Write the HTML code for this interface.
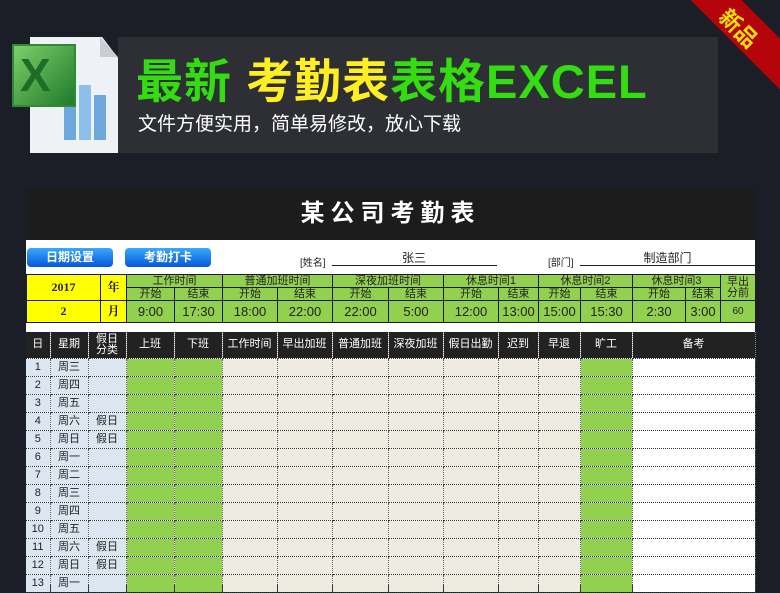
<!DOCTYPE html>
<html><head><meta charset="utf-8"><style>
*{margin:0;padding:0;box-sizing:border-box}
body{width:780px;height:585px;overflow:hidden;background:#1b1e26;position:relative;font-family:"Liberation Sans","Noto Sans CJK SC",sans-serif}
.a{position:absolute}
table{border-collapse:collapse;table-layout:fixed;position:absolute}
td{text-align:center;overflow:hidden;white-space:nowrap;padding:0}
.info td{border:1px solid #1a1a1a;background:#92d050;color:#222;font-size:11px;line-height:11px}
.info td.y{background:#ffff00;font-weight:bold;font-family:"Liberation Serif","Noto Serif CJK SC",serif;font-size:12px}
.info .v{font-size:13px}
.grid td{border-bottom:1px dotted #333;border-right:1px dotted #555;font-size:11px;height:18px;line-height:17px;color:#222}
.grid tr.h td{background:#222;color:#fff;height:26px;border-right:1px dotted #888;font-size:11px;line-height:11px}
.c1{background:#dce6f1}.g{background:#92d050}.b{background:#eeece1}.w{background:#fff}
</style></head><body>
<div class="a" style="left:118px;top:37px;width:600px;height:116px;background:#2d2f35"></div>
<div class="a" style="left:30px;top:37px;width:88px;height:116px;background:#eef1f6;clip-path:polygon(0 0,82% 0,100% 18%,100% 100%,0 100%)"></div>
<div class="a" style="left:100px;top:37px;width:18px;height:20px;background:#c9ced6;clip-path:polygon(0 0,100% 100%,0 100%)"></div>
<div class="a" style="left:64px;top:100px;width:12px;height:40px;background:#6fa8dc"></div>
<div class="a" style="left:79px;top:85px;width:12px;height:55px;background:#8cc0ea"></div>
<div class="a" style="left:94px;top:95px;width:12px;height:45px;background:#6fa8dc"></div>
<div class="a" style="left:12px;top:44px;width:64px;height:63px;background:linear-gradient(135deg,#7ccf6a,#1f7a2a);border:2px solid #2c8b34"></div>
<div class="a" style="left:20px;top:47px;font-size:46px;font-weight:bold;color:#1f6d25;line-height:56px">X</div>
<div class="a" style="left:136px;top:54px;font-size:47px;font-weight:bold;line-height:56px;color:#33dd11;letter-spacing:1px;white-space:nowrap">最新 <span style="color:#ffee22">考勤表</span>表格EXCEL</div>
<div class="a" style="left:138px;top:113px;font-size:19px;color:#fff;line-height:24px;white-space:nowrap">文件方便实用，简单易修改，放心下载</div>
<div class="a" style="left:642px;top:8px;width:200px;height:36px;background:#b5050a;transform:rotate(45deg)"></div>
<div class="a" style="left:716px;top:16px;color:#ffe000;font-size:22px;font-weight:bold;transform:rotate(45deg);white-space:nowrap;line-height:26px">新品</div>
<div class="a" style="left:26px;top:188px;width:729px;height:397px;background:#fff"></div>
<div class="a" style="left:26px;top:188px;width:729px;height:52px;background:#1c1c1c;color:#fff;font-size:24px;font-weight:bold;text-align:center;line-height:52px;letter-spacing:6px">某公司考勤表</div>
<div class="a" style="left:27px;top:248px;width:86px;height:19px;border-radius:4px;background:linear-gradient(#38a8ff,#0758d8);color:#fff;font-size:12px;text-align:center;line-height:19px;font-weight:bold">日期设置</div>
<div class="a" style="left:125px;top:248px;width:86px;height:19px;border-radius:4px;background:linear-gradient(#38a8ff,#0758d8);color:#fff;font-size:12px;text-align:center;line-height:19px;font-weight:bold">考勤打卡</div>
<div class="a" style="left:300px;top:254px;font-size:10px;color:#222">[姓名]</div>
<div class="a" style="left:332px;top:249px;width:165px;height:17px;border-bottom:1px solid #222;font-size:12px;padding-left:70px;color:#222">张三</div>
<div class="a" style="left:548px;top:254px;font-size:10px;color:#222">[部门]</div>
<div class="a" style="left:580px;top:249px;width:175px;height:17px;border-bottom:1px solid #222;font-size:12px;text-align:center;color:#222">制造部门</div>
<table class="info" style="left:26px;top:274px;width:729px">
<colgroup><col style="width:74px"><col style="width:26px"><col style="width:48px"><col style="width:48px"><col style="width:55px"><col style="width:55px"><col style="width:56px"><col style="width:55px"><col style="width:55px"><col style="width:40px"><col style="width:42px"><col style="width:52px"><col style="width:53px"><col style="width:35px"><col style="width:35px"></colgroup>
<tr style="height:13px"><td class="y" rowspan="2">2017</td><td class="y" rowspan="2">年</td><td colspan="2">工作时间</td><td colspan="2">普通加班时间</td><td colspan="2">深夜加班时间</td><td colspan="2">休息时间1</td><td colspan="2">休息时间2</td><td colspan="2">休息时间3</td><td rowspan="2">早出<br>分前</td></tr>
<tr style="height:13px"><td>开始</td><td>结束</td><td>开始</td><td>结束</td><td>开始</td><td>结束</td><td>开始</td><td>结束</td><td>开始</td><td>结束</td><td>开始</td><td>结束</td></tr>
<tr style="height:22px"><td class="y">2</td><td class="y">月</td><td class="v">9:00</td><td class="v">17:30</td><td class="v">18:00</td><td class="v">22:00</td><td class="v">22:00</td><td class="v">5:00</td><td class="v">12:00</td><td class="v">13:00</td><td class="v">15:00</td><td class="v">15:30</td><td class="v">2:30</td><td class="v">3:00</td><td style="font-size:10px">60</td></tr>
</table>
<table class="grid" style="left:26px;top:332px;width:729px">
<colgroup><col style="width:24px"><col style="width:38px"><col style="width:38px"><col style="width:48px"><col style="width:48px"><col style="width:55px"><col style="width:55px"><col style="width:56px"><col style="width:55px"><col style="width:55px"><col style="width:40px"><col style="width:42px"><col style="width:52px"><col style="width:123px"></colgroup>
<tr class="h"><td>日</td><td>星期</td><td>假日<br>分类</td><td>上班</td><td>下班</td><td>工作时间</td><td>早出加班</td><td>普通加班</td><td>深夜加班</td><td>假日出勤</td><td>迟到</td><td>早退</td><td>旷工</td><td>备考</td></tr>
<tr><td class="c1">1</td><td class="c1">周三</td><td class="c1"></td><td class="g"></td><td class="g"></td><td class="b"></td><td class="b"></td><td class="b"></td><td class="b"></td><td class="b"></td><td class="b"></td><td class="b"></td><td class="g"></td><td class="w"></td></tr>
<tr><td class="c1">2</td><td class="c1">周四</td><td class="c1"></td><td class="g"></td><td class="g"></td><td class="b"></td><td class="b"></td><td class="b"></td><td class="b"></td><td class="b"></td><td class="b"></td><td class="b"></td><td class="g"></td><td class="w"></td></tr>
<tr><td class="c1">3</td><td class="c1">周五</td><td class="c1"></td><td class="g"></td><td class="g"></td><td class="b"></td><td class="b"></td><td class="b"></td><td class="b"></td><td class="b"></td><td class="b"></td><td class="b"></td><td class="g"></td><td class="w"></td></tr>
<tr><td class="c1">4</td><td class="c1">周六</td><td class="c1">假日</td><td class="g"></td><td class="g"></td><td class="b"></td><td class="b"></td><td class="b"></td><td class="b"></td><td class="b"></td><td class="b"></td><td class="b"></td><td class="g"></td><td class="w"></td></tr>
<tr><td class="c1">5</td><td class="c1">周日</td><td class="c1">假日</td><td class="g"></td><td class="g"></td><td class="b"></td><td class="b"></td><td class="b"></td><td class="b"></td><td class="b"></td><td class="b"></td><td class="b"></td><td class="g"></td><td class="w"></td></tr>
<tr><td class="c1">6</td><td class="c1">周一</td><td class="c1"></td><td class="g"></td><td class="g"></td><td class="b"></td><td class="b"></td><td class="b"></td><td class="b"></td><td class="b"></td><td class="b"></td><td class="b"></td><td class="g"></td><td class="w"></td></tr>
<tr><td class="c1">7</td><td class="c1">周二</td><td class="c1"></td><td class="g"></td><td class="g"></td><td class="b"></td><td class="b"></td><td class="b"></td><td class="b"></td><td class="b"></td><td class="b"></td><td class="b"></td><td class="g"></td><td class="w"></td></tr>
<tr><td class="c1">8</td><td class="c1">周三</td><td class="c1"></td><td class="g"></td><td class="g"></td><td class="b"></td><td class="b"></td><td class="b"></td><td class="b"></td><td class="b"></td><td class="b"></td><td class="b"></td><td class="g"></td><td class="w"></td></tr>
<tr><td class="c1">9</td><td class="c1">周四</td><td class="c1"></td><td class="g"></td><td class="g"></td><td class="b"></td><td class="b"></td><td class="b"></td><td class="b"></td><td class="b"></td><td class="b"></td><td class="b"></td><td class="g"></td><td class="w"></td></tr>
<tr><td class="c1">10</td><td class="c1">周五</td><td class="c1"></td><td class="g"></td><td class="g"></td><td class="b"></td><td class="b"></td><td class="b"></td><td class="b"></td><td class="b"></td><td class="b"></td><td class="b"></td><td class="g"></td><td class="w"></td></tr>
<tr><td class="c1">11</td><td class="c1">周六</td><td class="c1">假日</td><td class="g"></td><td class="g"></td><td class="b"></td><td class="b"></td><td class="b"></td><td class="b"></td><td class="b"></td><td class="b"></td><td class="b"></td><td class="g"></td><td class="w"></td></tr>
<tr><td class="c1">12</td><td class="c1">周日</td><td class="c1">假日</td><td class="g"></td><td class="g"></td><td class="b"></td><td class="b"></td><td class="b"></td><td class="b"></td><td class="b"></td><td class="b"></td><td class="b"></td><td class="g"></td><td class="w"></td></tr>
<tr><td class="c1">13</td><td class="c1">周一</td><td class="c1"></td><td class="g"></td><td class="g"></td><td class="b"></td><td class="b"></td><td class="b"></td><td class="b"></td><td class="b"></td><td class="b"></td><td class="b"></td><td class="g"></td><td class="w"></td></tr>
</table>
</body></html>
